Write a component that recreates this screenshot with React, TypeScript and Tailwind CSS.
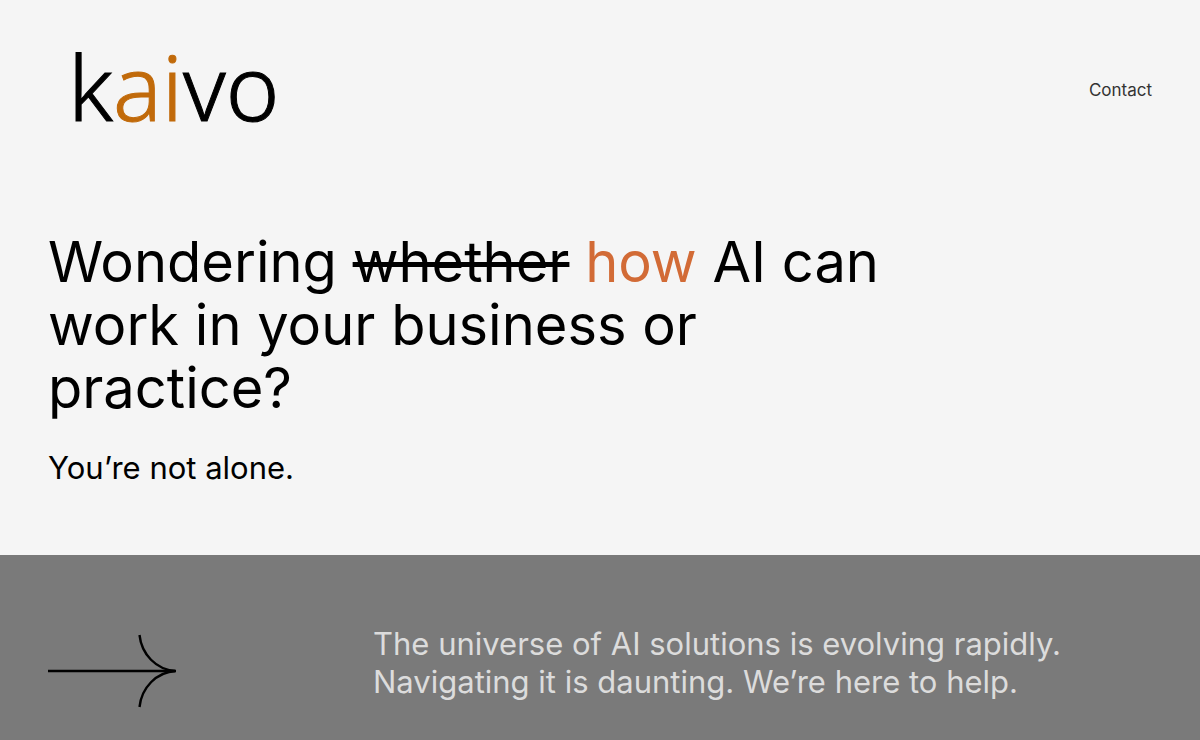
const heading = "font-['Inter',sans-serif] font-normal";

function Logo() {
  return (
    <a
      href="#home"
      aria-label="kaivo home"
      className="pl-5 font-['Noto_Sans',sans-serif] text-[91px] leading-[108px] font-light text-black [-webkit-text-stroke:1px_currentColor]"
    >
      k<span className="text-[#c16a0a]">ai</span>vo
    </a>
  );
}

function Arrow() {
  return (
    <svg
      viewBox="0 0 128 74"
      className="h-[74px] w-32"
      fill="none"
      stroke="#000"
      strokeWidth="2.4"
      aria-hidden="true"
    >
      <path d="M0 37H127" />
      <path d="M91.500 1C93.500 20 108 36 128 37C108 38 93.500 54 91.500 73" />
    </svg>
  );
}

export default function App() {
  return (
    <div className="min-h-screen bg-[#7a7a7a]">
      <div className="bg-[#f5f5f5] px-12 pb-[68px]">
        <header className="flex items-center justify-between pt-8">
          <Logo />
          <nav className="pt-2">
            <a
              href="#contact"
              className="font-['Inter',sans-serif] text-[17px] leading-6 font-normal text-[#333]"
            >
              Contact
            </a>
          </nav>
        </header>
        <main className="pt-[91px]">
          <h1 className={`${heading} max-w-[850px] text-[56px] leading-[63px] text-black`}>
            Wondering <s className="decoration-[5px]">whether</s>{" "}
            <span className="text-[#d26b36]">how</span> AI can work in your business or practice?
          </h1>
          <p className={`${heading} mt-[29px] text-[31px] leading-[38px] text-black`}>You’re not alone.</p>
        </main>
      </div>
      <section className="grid grid-cols-[325px_1fr] items-center px-12 pt-[63px] pb-10">
        <div className="pt-4">
          <Arrow />
        </div>
        <h2 className={`${heading} max-w-[740px] text-[31px] leading-[38px] text-[#dcdcdc]`}>
          The universe of AI solutions is evolving rapidly. Navigating it is daunting. We’re here to help.
        </h2>
      </section>
    </div>
  );
}
